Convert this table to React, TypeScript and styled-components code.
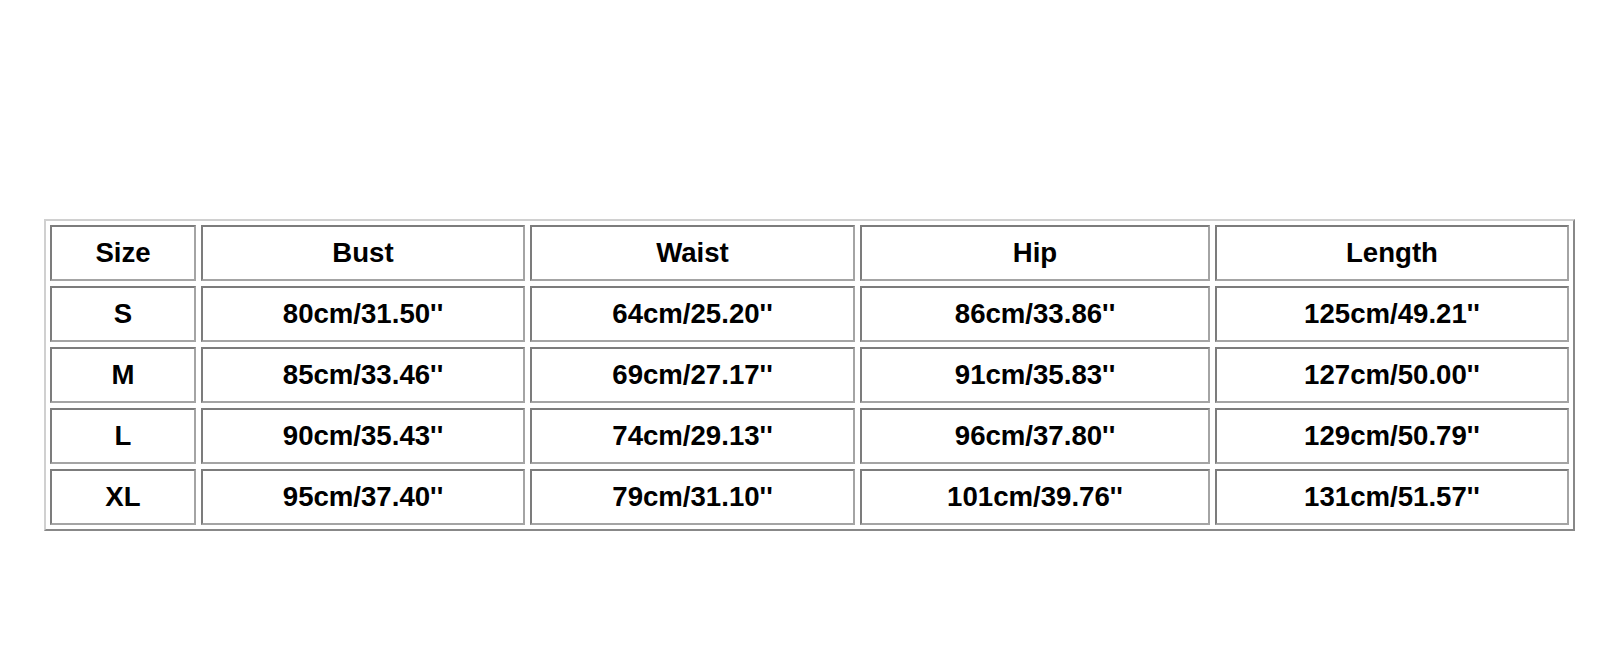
import styled, { createGlobalStyle } from "styled-components";

const GlobalStyle = createGlobalStyle`
  body {
    margin : 0;
    background : #ffffff;
    font-family : "Liberation Sans", Arial, sans-serif;
  }
`

const headers = ["Size", "Bust", "Waist", "Hip", "Length"];

const rows = [
  ["S", "80cm/31.50''", "64cm/25.20''", "86cm/33.86''", "125cm/49.21''"],
  ["M", "85cm/33.46''", "69cm/27.17''", "91cm/35.83''", "127cm/50.00''"],
  ["L", "90cm/35.43''", "74cm/29.13''", "96cm/37.80''", "129cm/50.79''"],
  ["XL", "95cm/37.40''", "79cm/31.10''", "101cm/39.76''", "131cm/51.57''"],
];

const App = () => {
  return (
    <StPage>
      <GlobalStyle />
      <StTable>
        {headers.map((h) => (
          <StCell key = {h}>{h}</StCell>
        ))}
        {rows.map((row) =>
          row.map((value, i) => (
            <StCell key = {row[0] + i}>{value}</StCell>
          ))
        )}
      </StTable>
    </StPage>
  )
};

export default App;

const StPage = styled.div`
  width : 1600px;
  height : 654px;
  box-sizing : border-box;
  padding-top : 219px;
  padding-left : 44px;
  background : #ffffff;
`

const StTable = styled.div`
  display : grid;
  grid-template-columns : 146px 324px 325px 350px 354px;
  grid-auto-rows : 56px;
  gap : 5px;
  padding : 4px;
  width : max-content;
  border : 2px solid;
  border-color : #d0d0d0 #888888 #888888 #d0d0d0;
`

const StCell = styled.div`
  display : flex;
  align-items : center;
  justify-content : center;
  box-sizing : border-box;
  border : 2px solid;
  border-color : #7c7c7c #a4a4a4 #a4a4a4 #7c7c7c;
  font-size : 27.6px;
  font-weight : 700;
  color : #000000;
  white-space : nowrap;
`
